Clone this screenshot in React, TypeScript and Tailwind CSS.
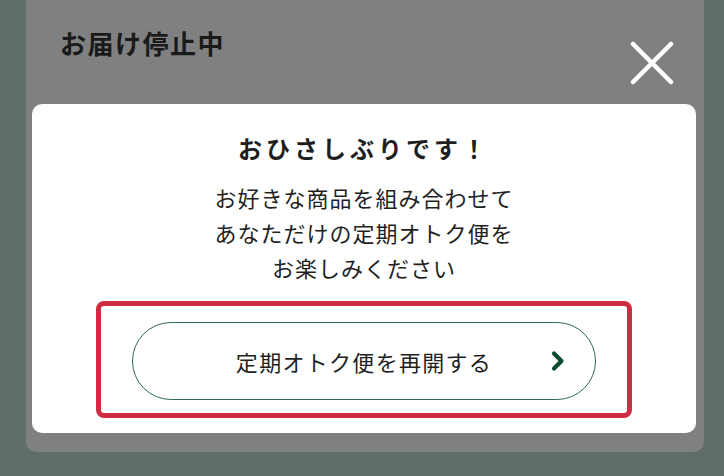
import React from 'react';

const font = { fontFamily: '"Noto Sans CJK JP", "Noto Sans", sans-serif' };

const CloseIcon: React.FC = () => (
  <svg width="44" height="44" viewBox="0 0 44 44" fill="none">
    <path d="M3 3L41 41M41 3L3 41" stroke="#ffffff" strokeWidth="4.5" strokeLinecap="round" />
  </svg>
);

const Chevron: React.FC = () => (
  <svg width="16" height="22" viewBox="0 0 16 22" fill="none">
    <path d="M4 3.5L11.5 11L4 18.5" stroke="#0b4d2c" strokeWidth="4.2" strokeLinecap="round" strokeLinejoin="round" />
  </svg>
);

export default function App() {
  return (
    <div
      className="w-[724px] h-[476px] bg-[#5f6e66] pl-[26px] pr-[20px] overflow-hidden"
      style={font}
    >
      <div className="bg-[#808080] rounded-b-[10px] pb-[19px]">
        {/* ヘッダー */}
        <div className="h-[104px] flex justify-between items-start pl-[34px] pr-[30px]">
          <h1 className="pt-[28px] text-[26px] leading-[30px] font-bold tracking-[1.5px] text-[#1a1a1a]">
            お届け停止中
          </h1>
          <button className="mt-[41px]">
            <CloseIcon />
          </button>
        </div>

        {/* モーダル本体 */}
        <div className="ml-[6px] mr-[8px] bg-white rounded-[10px] pt-[28px] pb-[15px] text-center text-[#1f1f1f]">
          <h2 className="text-[24px] leading-[32px] font-bold tracking-[4px]">
            おひさしぶりです！
          </h2>
          <p className="mt-[16px] text-[22px] leading-[35px] tracking-[1px]">
            お好きな商品を組み合わせて
            <br />
            あなただけの定期オトク便を
            <br />
            お楽しみください
          </p>

          <div className="mt-[16px] mx-auto w-[536px] border-[5px] border-[#cf2c43] rounded-[8px] pt-[16px] pb-[13px] px-[31px]">
            <button className="relative w-full h-[78px] rounded-full border-[1.5px] border-[#2f6b4e] bg-white flex items-center justify-center">
              <span className="text-[22px] leading-[30px] tracking-[1.3px] text-[#1f1f1f]">
                定期オトク便を再開する
              </span>
              <span className="absolute right-[29px] top-1/2 -translate-y-1/2 flex">
                <Chevron />
              </span>
            </button>
          </div>
        </div>
      </div>
    </div>
  );
}
